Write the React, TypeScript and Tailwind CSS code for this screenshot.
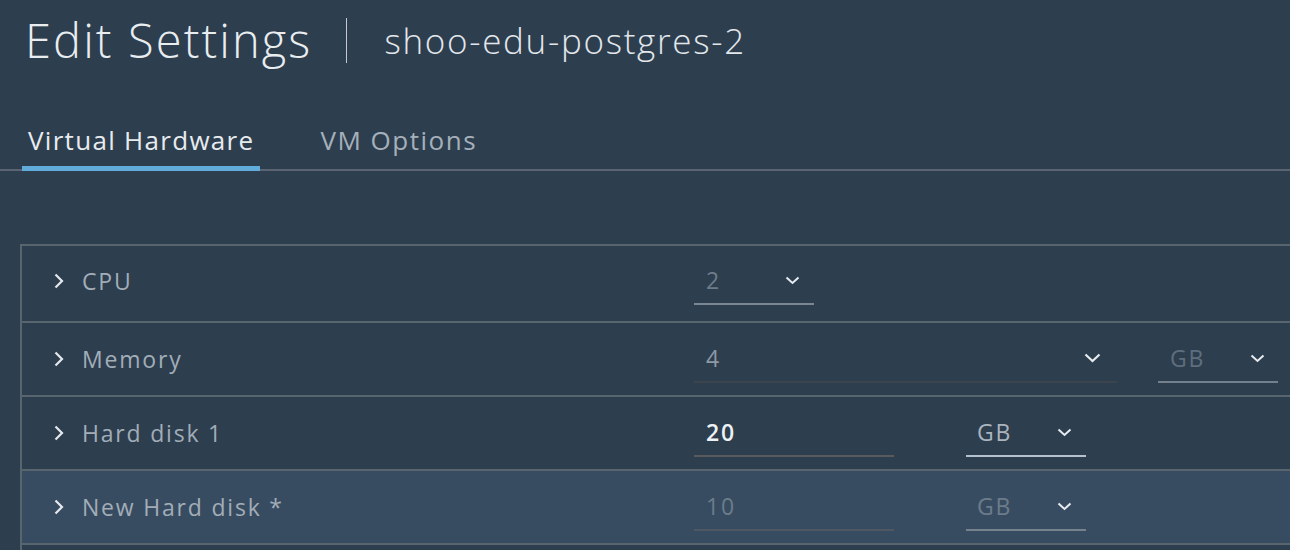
import React from 'react';

const font = { fontFamily: '"Open Sans", "Noto Sans", sans-serif' };

function RowChevron() {
  return (
    <svg width="12" height="18" viewBox="0 0 12 18" className="shrink-0">
      <polyline points="2.5,2.5 9,9 2.5,15.5" fill="none" stroke="#e4e8ec" strokeWidth="2.2" />
    </svg>
  );
}

function Caret({ big = false }: { big?: boolean }) {
  return big ? (
    <svg width="17" height="10" viewBox="0 0 17 10" className="shrink-0">
      <polyline points="1.5,1.5 8.5,8 15.5,1.5" fill="none" stroke="#e8ebee" strokeWidth="2.2" />
    </svg>
  ) : (
    <svg width="15" height="9" viewBox="0 0 15 9" className="shrink-0">
      <polyline points="1.5,1.5 7.5,7 13.5,1.5" fill="none" stroke="#e8ebee" strokeWidth="2" />
    </svg>
  );
}

export default function App() {
  return (
    <div className="h-[550px] w-full overflow-hidden bg-[#2d3e4f] text-[#e6eaee]" style={font}>
      {/* Header */}
      <div className="flex h-[80px] items-center pl-[25px]">
        <h1 className="text-[47px] font-light leading-none tracking-[2.1px] text-[#e9edf0]">Edit Settings</h1>
        <div className="ml-[34px] h-[45px] w-px bg-[#c3c9cf]" />
        <span className="ml-[37px] text-[35px] font-light leading-none tracking-[1.7px] text-[#e3e7eb]">
          shoo-edu-postgres-2
        </span>
      </div>

      {/* Tabs */}
      <div className="mt-[44px] flex gap-[60px] border-b-2 border-[#5b6571] pl-[22px]">
        <button className="-mb-[2px] border-b-[5px] border-[#62acdb] px-[6px] pb-[10px] text-[26px] leading-[32px] tracking-[1.3px] text-[#e8ebee]">
          Virtual Hardware
        </button>
        <button className="pb-[13px] text-[26px] leading-[32px] tracking-[1.5px] text-[#a5b0ba]">VM Options</button>
      </div>

      {/* Hardware list */}
      <div className="ml-[20px] mt-[73px] border-l-2 border-t-2 border-[#58656f] text-[23px] tracking-[1.8px]">
        {/* CPU */}
        <div className="flex h-[77px] items-center border-b-2 border-[#58656f] pb-[5px]">
          <div className="flex w-[672px] items-center gap-[17px] pl-[31px]">
            <RowChevron />
            <span className="text-[#a2adb8]">CPU</span>
          </div>
          <div className="flex h-[48px] w-[120px] items-center justify-between border-b-2 border-[#7a8692] pl-[12px] pr-[14px]">
            <span className="text-[#6e7c89]">2</span>
            <Caret />
          </div>
        </div>

        {/* Memory */}
        <div className="flex h-[74px] items-center border-b-2 border-[#58656f]">
          <div className="flex w-[672px] items-center gap-[17px] pl-[31px]">
            <RowChevron />
            <span className="text-[#a2adb8]">Memory</span>
          </div>
          <div className="flex h-[48px] w-[423px] items-center justify-between border-b-2 border-[#3c444d] pl-[12px] pr-[16px]">
            <span className="text-[#8d99a5]">4</span>
            <Caret big />
          </div>
          <div className="ml-[41px] flex h-[48px] w-[120px] items-center justify-between border-b-2 border-[#74808c] pl-[12px] pr-[13px]">
            <span className="text-[#5f6e7c]">GB</span>
            <Caret />
          </div>
        </div>

        {/* Hard disk 1 */}
        <div className="flex h-[74px] items-center border-b-2 border-[#58656f]">
          <div className="flex w-[672px] items-center gap-[17px] pl-[31px]">
            <RowChevron />
            <span className="text-[#a2adb8]">Hard disk 1</span>
          </div>
          <div className="flex h-[48px] w-[200px] items-center border-b-2 border-[#5a5a5c] pl-[12px]">
            <span className="font-semibold text-[#eef1f4]">20</span>
          </div>
          <div className="ml-[72px] flex h-[48px] w-[120px] items-center justify-between border-b-2 border-[#b5c1cd] pl-[11px] pr-[14px]">
            <span className="text-[#aab4be]">GB</span>
            <Caret />
          </div>
        </div>

        {/* New Hard disk */}
        <div className="flex h-[74px] items-center border-b-2 border-[#58656f] bg-[#384c61]">
          <div className="flex w-[672px] items-center gap-[17px] pl-[31px]">
            <RowChevron />
            <span className="text-[#a2adb8]">New Hard disk *</span>
          </div>
          <div className="flex h-[48px] w-[200px] items-center border-b-2 border-[#4f5862] pl-[12px]">
            <span className="text-[#6c7c8b]">10</span>
          </div>
          <div className="ml-[72px] flex h-[48px] w-[120px] items-center justify-between border-b-2 border-[#76828e] pl-[11px] pr-[14px]">
            <span className="text-[#6c7c8b]">GB</span>
            <Caret />
          </div>
        </div>

        <div className="h-[40px]" />
      </div>
    </div>
  );
}
